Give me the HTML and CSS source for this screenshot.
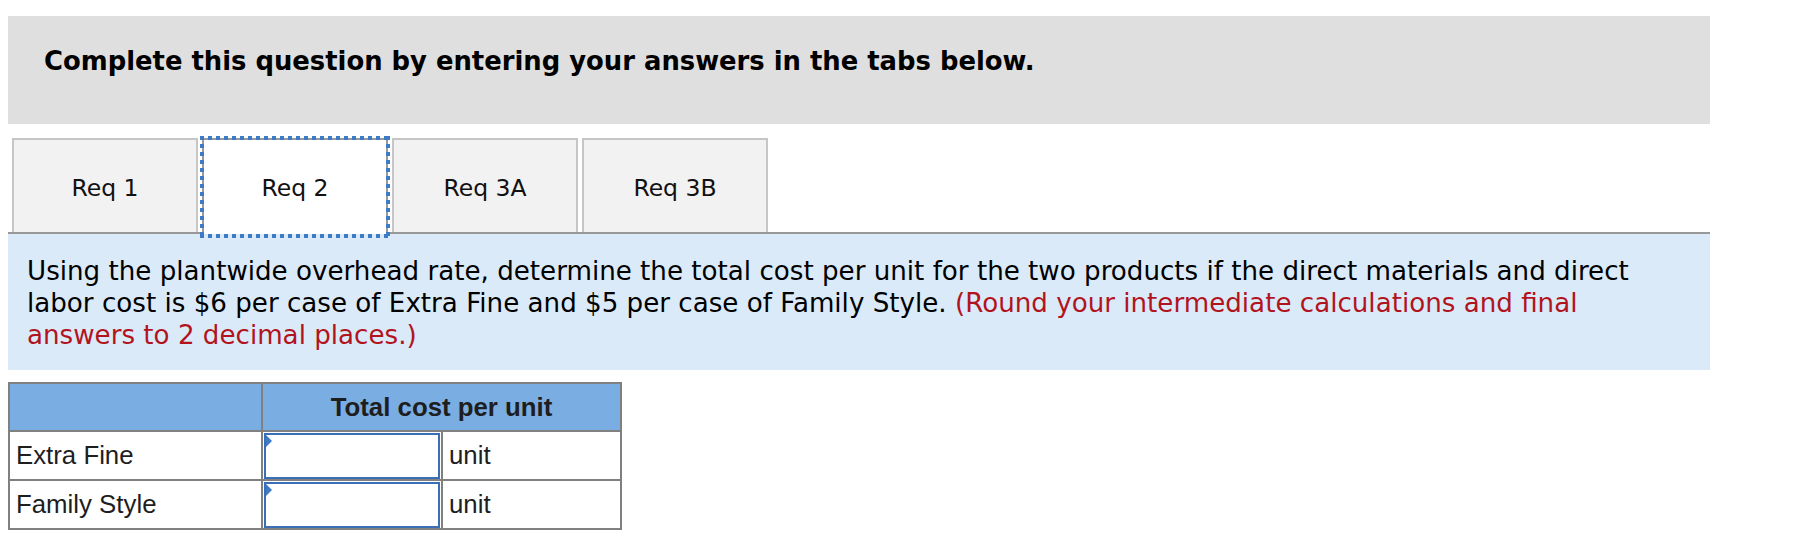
FILE: index.html
```html
<!DOCTYPE html>
<html lang="en">
<head>
<meta charset="utf-8">
<title>Req 2</title>
<link rel="stylesheet" href="styles.css">
</head>
<body>
<div class="page">
  <div class="header">
    <h2 class="header-title">Complete this question by entering your answers in the tabs below.</h2>
  </div>

  <div class="tabs">
    <div class="tab">Req 1</div>
    <div class="tab active">Req 2</div>
    <div class="tab">Req 3A</div>
    <div class="tab">Req 3B</div>
  </div>

  <p class="instructions">Using the plantwide overhead rate, determine the total cost per unit for the two products if the direct materials and direct labor cost is $6 per case of Extra Fine and $5 per case of Family Style. <span class="note">(Round your intermediate calculations and final answers to 2 decimal places.)</span></p>

  <table class="grid">
    <colgroup>
      <col class="c1">
      <col class="c2">
      <col class="c3">
    </colgroup>
    <thead>
      <tr class="head-row">
        <th></th>
        <th colspan="2">Total cost per unit</th>
      </tr>
    </thead>
    <tbody>
      <tr class="row">
        <td class="label">Extra Fine</td>
        <td class="input-cell"><div class="field"><input class="entry" type="text"><span class="flag"></span></div></td>
        <td class="unit">unit</td>
      </tr>
      <tr class="row">
        <td class="label">Family Style</td>
        <td class="input-cell"><div class="field"><input class="entry" type="text"><span class="flag"></span></div></td>
        <td class="unit">unit</td>
      </tr>
    </tbody>
  </table>
</div>
</body>
</html>
```

FILE: styles.css
```css
html, body {
  margin: 0;
  padding: 0;
  background: #ffffff;
}

.page {
  padding: 16px 0 0 8px;
  width: 1702px;
  font-family: "DejaVu Sans", Verdana, sans-serif;
  color: #000;
}

.header {
  background: #dfdfdf;
  height: 108px;
  box-sizing: border-box;
  padding: 30px 36px 0;
}

.header-title {
  margin: 0;
  font-size: 25.85px;
  font-weight: bold;
  line-height: normal;
}

.tabs {
  display: flex;
  align-items: flex-end;
  gap: 4px;
  margin-top: 14px;
  padding-left: 4px;
  border-bottom: 2px solid #999999;
}

.tab {
  width: 186px;
  height: 94px;
  box-sizing: border-box;
  border: 2px solid #c6c6c6;
  border-bottom: none;
  background: #f2f2f2;
  display: flex;
  align-items: center;
  justify-content: center;
  padding-top: 4px;
  font-size: 23.5px;
  color: #111;
}

.tab.active {
  position: relative;
  z-index: 2;
  height: 96px;
  padding-bottom: 2px;
  margin-bottom: -2px;
  background: #ffffff;
  border-color: #999999;
}

.tab.active::after {
  content: "";
  position: absolute;
  top: -4px;
  left: -4px;
  right: -4px;
  bottom: -4px;
  pointer-events: none;
  background:
    repeating-linear-gradient(90deg, #3d7bc6 0 4px, transparent 4px 8px) top left / 100% 4px no-repeat,
    repeating-linear-gradient(90deg, #3d7bc6 0 4px, transparent 4px 8px) bottom left / 100% 4px no-repeat,
    repeating-linear-gradient(180deg, #3d7bc6 0 4px, transparent 4px 8px) top left / 4px 100% no-repeat,
    repeating-linear-gradient(180deg, #3d7bc6 0 4px, transparent 4px 8px) top right / 4px 100% no-repeat;
}

.instructions {
  margin: 0;
  background: #dbeaf8;
  padding: 21px 50px 19px 19px;
  font-size: 26.15px;
  line-height: 32px;
}

.note {
  color: #b2141e;
}

.grid {
  margin-top: 12px;
  border-collapse: collapse;
  width: 612px;
  table-layout: fixed;
  font-family: "Liberation Sans", Arial, sans-serif;
  font-size: 25.8px;
  color: #1e1e1e;
}

.c1 { width: 253px; }
.c2 { width: 180px; }
.c3 { width: 179px; }

.grid th,
.grid td {
  border: 2px solid #808080;
  padding: 0 6px;
}

.head-row th {
  background: #7aade1;
  height: 46px;
  font-weight: bold;
  text-align: center;
}

.row td {
  height: 47px;
}

.grid .input-cell {
  padding: 0 1px;
}

.field {
  position: relative;
}

.entry {
  display: block;
  box-sizing: border-box;
  width: 100%;
  height: 46px;
  margin: 0;
  border: 2px solid #3b6fb5;
  background: #ffffff;
  font-family: "Liberation Sans", Arial, sans-serif;
  font-size: 22px;
  outline: none;
}

.flag {
  position: absolute;
  left: 2px;
  top: 2px;
  width: 0;
  height: 0;
  border-top: 6px solid transparent;
  border-bottom: 6px solid transparent;
  border-left: 6px solid #3d7bc6;
}

.unit {
  text-align: left;
}
```
